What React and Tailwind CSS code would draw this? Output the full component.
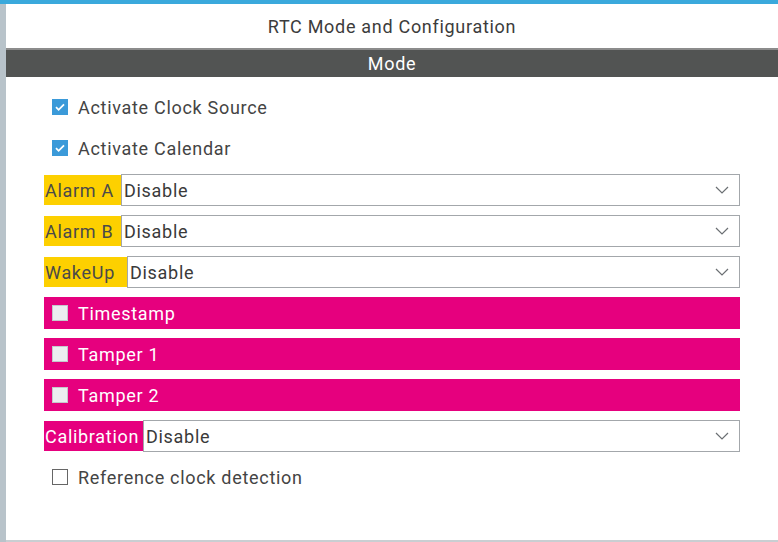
import React from 'react';

const Chevron = () => (
  <svg className="w-[14px] h-[8px]" viewBox="0 0 14 8" fill="none" stroke="#6b6f73" strokeWidth="1.2">
    <path d="M1 1l6 6 6-6" />
  </svg>
);

const CheckedBox = () => (
  <span className="w-4 h-4 bg-[#3b9ad9] flex items-center justify-center">
    <svg className="w-3 h-3" viewBox="0 0 12 12" fill="none" stroke="#fff" strokeWidth="1.8">
      <path d="M2 6.2l2.6 2.6L10 3.3" />
    </svg>
  </span>
);

function SelectRow({ label, tone, width }) {
  const labelCls = tone === 'pink'
    ? 'bg-[#e6007e] text-white'
    : 'bg-[#fdd000] text-[#4a4a4a]';
  return (
    <div className="flex items-center h-8">
      <span className={`${labelCls} ${width} h-[30px] flex items-center pl-px whitespace-nowrap`}>{label}</span>
      <div className="flex-1 h-8 border border-[#a3a7ab] bg-white flex items-center justify-between pl-[2px] pr-[10px] text-[#3a3a3a]">
        <span>Disable</span>
        <Chevron />
      </div>
    </div>
  );
}

function PinkRow({ label }) {
  return (
    <div className="h-8 bg-[#e6007e] flex items-center gap-[10px] pl-[8px] text-white">
      <span className="w-4 h-4 bg-[#eceef0] border border-[#c4c8cc]" />
      <span>{label}</span>
    </div>
  );
}

export default function App() {
  return (
    <div className="w-[778px] h-[542px] bg-white flex flex-col font-['Roboto',sans-serif] text-[18px] tracking-[0.7px] overflow-hidden">
      <div className="h-1 bg-[#3aa9dc]" />
      <div className="flex flex-1">
        <div className="w-[6px] bg-[#b8c3ca]" />
        <div className="flex-1 flex flex-col border-b-2 border-[#c9ced2]">
          <div className="h-[44px] flex items-center justify-center text-[#3c3c3c]">
            RTC Mode and Configuration
          </div>
          <div className="h-[29px] bg-[#525453] border-t-2 border-[#8c8c8c] flex items-center justify-center text-white">
            Mode
          </div>
          <div className="flex flex-col pl-[38px] pr-[38px] pt-[19px] text-[#444]">
            <label className="flex items-center gap-[10px] h-[22px] pl-[8px]">
              <CheckedBox />
              <span>Activate Clock Source</span>
            </label>
            <label className="flex items-center gap-[10px] h-[22px] pl-[8px] mt-[19px]">
              <CheckedBox />
              <span>Activate Calendar</span>
            </label>
            <div className="flex flex-col gap-[9px] mt-[15px]">
              <SelectRow label="Alarm A" tone="yellow" width="w-[77px]" />
              <SelectRow label="Alarm B" tone="yellow" width="w-[77px]" />
              <SelectRow label="WakeUp" tone="yellow" width="w-[83px]" />
              <PinkRow label="Timestamp" />
              <PinkRow label="Tamper 1" />
              <PinkRow label="Tamper 2" />
              <SelectRow label="Calibration" tone="pink" width="w-[99px]" />
            </div>
            <label className="flex items-center gap-[10px] h-[22px] pl-[8px] mt-[14px]">
              <span className="w-4 h-4 border border-[#666] bg-white" />
              <span>Reference clock detection</span>
            </label>
          </div>
        </div>
      </div>
    </div>
  );
}
